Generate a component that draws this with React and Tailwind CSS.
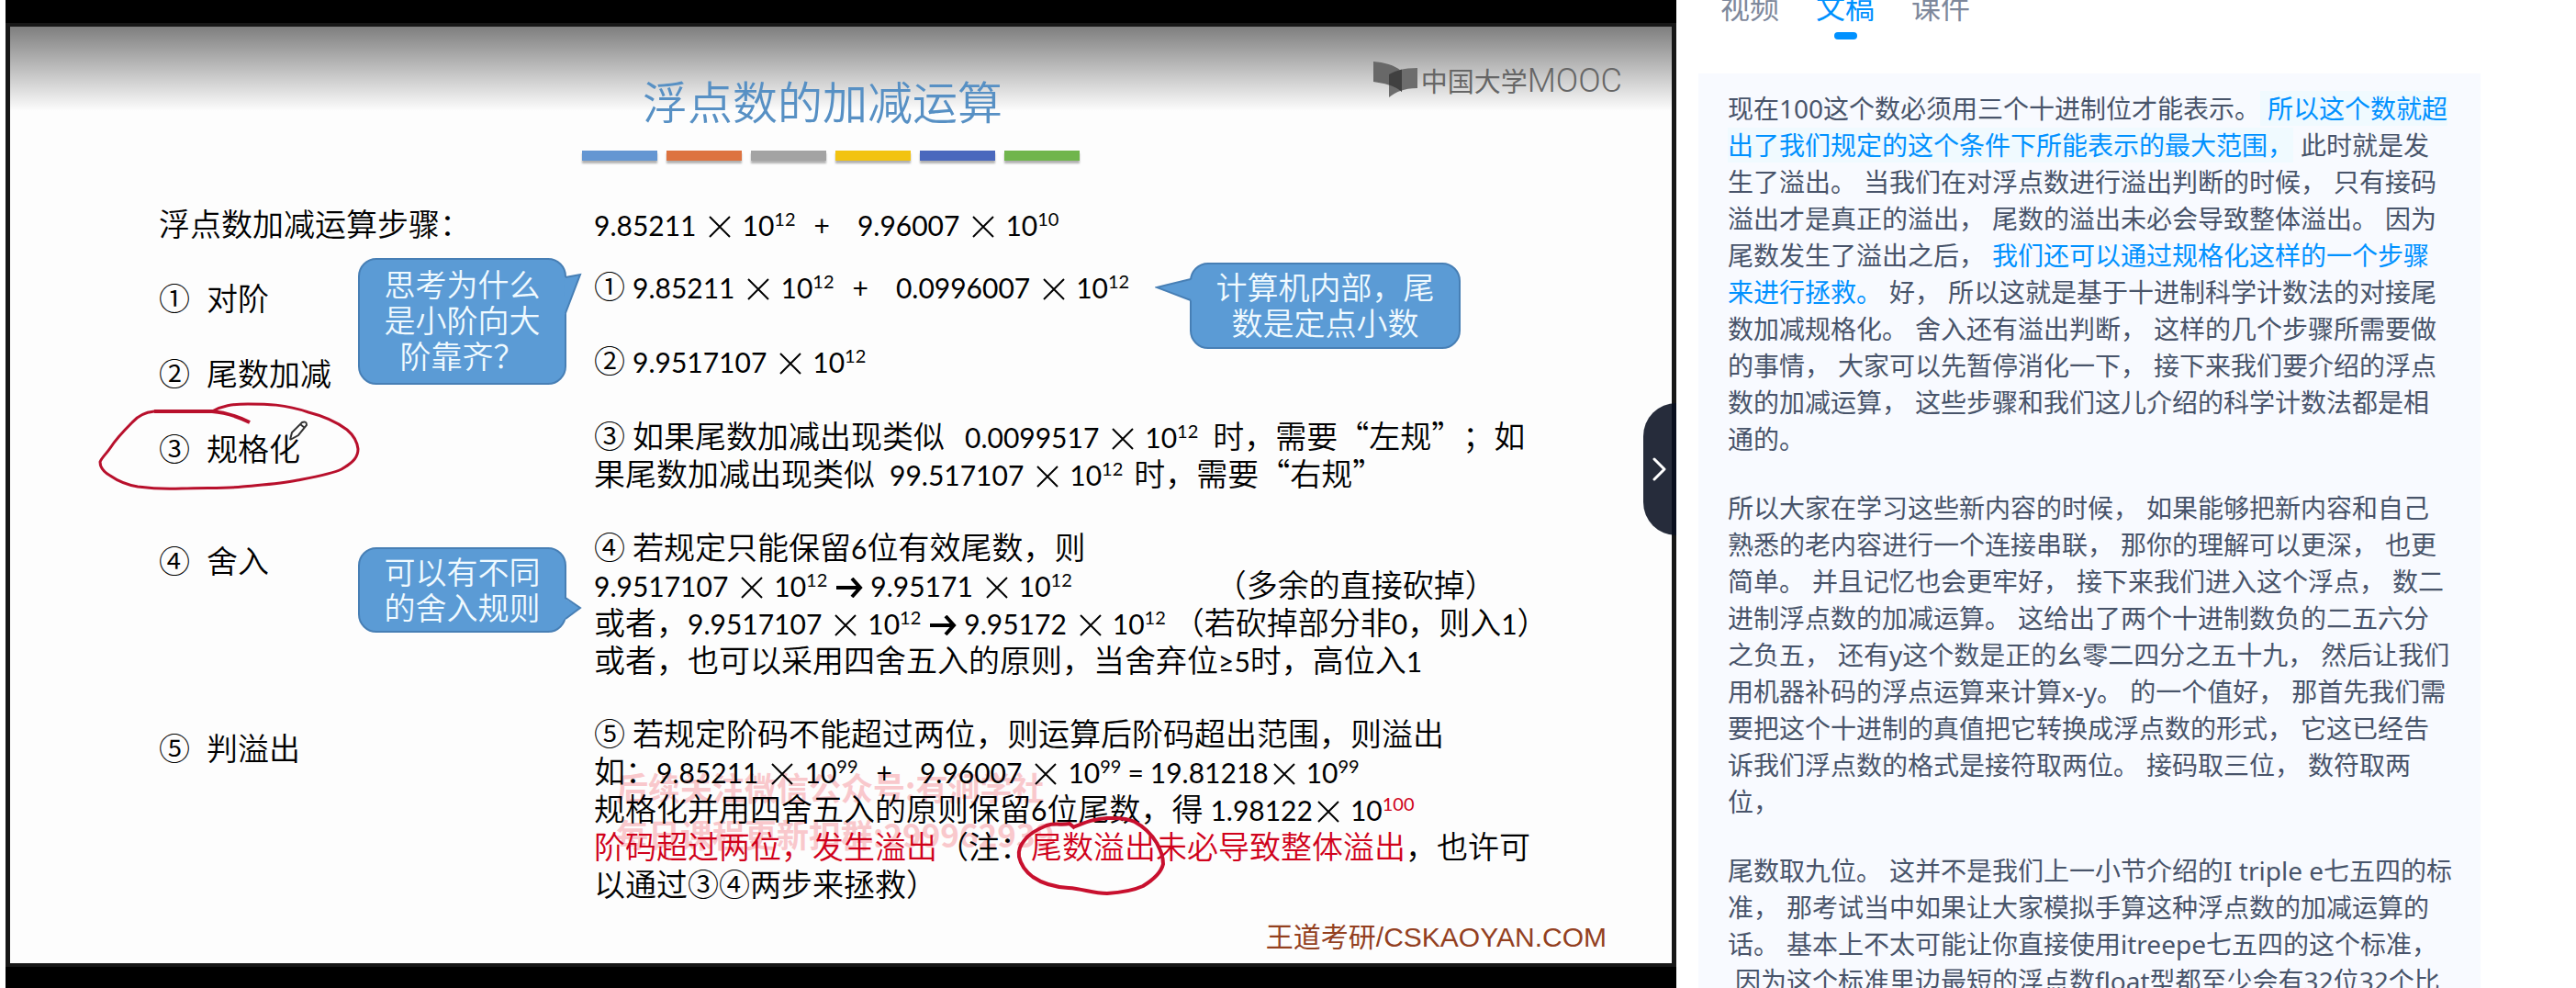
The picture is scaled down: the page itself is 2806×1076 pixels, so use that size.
const barColors = ['bg-[#6496d2]', 'bg-[#dd7340]', 'bg-[#a3a3a3]', 'bg-[#f2c311]', 'bg-[#4a68bd]', 'bg-[#70b54c]'];

function Num({ children }) {
  return <span className="font-['Lato',sans-serif] text-[30px] leading-none font-normal">{children}</span>;
}

function Times({ tight }) {
  return (
    <svg className={`mr-[12px] inline-block h-[24px] w-[24px] align-[-2px] ${tight ? 'ml-[5px]' : 'ml-[14px]'}`} viewBox="0 0 24 24" fill="none" stroke="currentColor" strokeWidth="2" aria-label="×">
      <path d="M1 1 23 23M23 1 1 23" />
    </svg>
  );
}

function Sci({ m, e, red, tight }) {
  return (
    <>
      <Num>{m}</Num>
      <Times tight={tight} />
      <Num>10</Num>
      <span className={`inline-block align-[11px] font-['Lato',sans-serif] text-[20px] leading-none font-normal ${red ? 'text-[#d0021b]' : ''}`}>{e}</span>
    </>
  );
}

function Plus() {
  return <span className="mr-[30px] ml-[20px] font-['Lato',sans-serif] text-[30px] leading-none font-normal">+</span>;
}

function Arrow() {
  return (
    <svg className="mr-[8px] ml-[10px] inline-block h-[22px] w-[29px] align-[-1px]" viewBox="0 0 29 22" fill="none" stroke="currentColor" strokeWidth="4" aria-label="→">
      <path d="M0 11H26M17 1 26 11 17 21" />
    </svg>
  );
}

function Step({ n, children, className = '' }) {
  return (
    <li className={`flex gap-[18px] leading-[41px] whitespace-nowrap ${className}`}>
      <span>{n}</span>
      <span>{children}</span>
    </li>
  );
}

function Bubble({ children, tail, className = '' }) {
  return (
    <div className={`relative rounded-[20px] border-2 border-[#477fb5] bg-[#5b9bd5] text-center leading-[39px] whitespace-nowrap text-[#f0faff] ${className}`}>
      {children}
      {tail}
    </div>
  );
}

function Slide() {
  return (
    <section className="relative min-h-0 flex-1 overflow-hidden bg-[#fdfdfd] font-['Noto_Sans_CJK_SC',sans-serif] text-[34px] font-[350] text-black [text-spacing-trim:space-all]">
      <div className="absolute inset-x-0 top-0 h-[92px] bg-linear-to-b from-black/50 to-black/0" />

      <div className="absolute top-[38px] right-[54px] flex items-center text-[#666]">
        <svg className="mr-[4px] h-[40px] w-[48px]" viewBox="0 0 48 40" aria-hidden="true">
          <path d="M0 0C12 1 24 4 31 11V33C24 26 12 24 0 22Z" fill="#686868" />
          <path d="M17 14C25 9 36 7 48 7V29C36 29 26 32 17 39Z" fill="#6d6d6d" />
          <path d="M17 14C22 11 27 9.500 31 8.800V33C27 29.500 22 27 17 25.500Z" fill="#404040" />
        </svg>
        <p className="text-[29px] leading-[40px] font-normal">
          中国大学<span className="font-['Roboto',sans-serif] text-[36px] leading-none font-light">MOOC</span>
        </p>
      </div>

      <h1 className="relative mt-[45px] pl-[689px] text-[49px] leading-[70px] text-[#5790c4]">浮点数的加减运算</h1>
      <div className="relative mt-[20px] flex gap-[10px] pl-[623px]">
        {barColors.map((c) => (
          <div key={c} className={`h-[11px] w-[82px] shadow-[0_3px_2px_rgba(0,0,0,0.3)] ${c}`} />
        ))}
      </div>

      <div className="mt-[47px] flex items-center leading-[41px] whitespace-nowrap">
        <h2 className="w-[636px] pl-[162px]">浮点数加减运算步骤：</h2>
        <p><Sci m="9.85211" e="12" /><Plus /><Sci m="9.96007" e="10" /></p>
      </div>

      <div className="flex pl-[162px]">
        <ol className="w-[217px] shrink-0 pt-[40px]">
          <Step n="①">对阶</Step>
          <Step n="②" className="mt-[41px]">尾数加减</Step>
          <Step n="③" className="mt-[41px]">规格化</Step>
          <Step n="④" className="mt-[81px]">舍入</Step>
          <Step n="⑤" className="mt-[163px]">判溢出</Step>
        </ol>

        <div className="w-[257px] shrink-0 pt-[18px]">
          <Bubble
            className="h-[138px] w-[227px] pt-[6px]"
            tail={
              <svg className="absolute top-[14px] -right-[19px] h-[48px] w-[20px]" viewBox="0 0 20 48" aria-hidden="true">
                <path d="M0 5 18 2 1 46Z" fill="#5b9bd5" />
                <path d="M2 5 18 2 2 44" fill="none" stroke="#477fb5" strokeWidth="2" />
              </svg>
            }
          >
            思考为什么<br />是小阶向大<br />阶靠齐？
          </Bubble>
          <Bubble
            className="mt-[177px] h-[93px] w-[227px] pt-[4px]"
            tail={
              <svg className="absolute top-[50px] -right-[19px] h-[30px] w-[20px]" viewBox="0 0 20 30" aria-hidden="true">
                <path d="M0 3 18 14 0 27Z" fill="#5b9bd5" />
                <path d="M2 3 18 14 2 26" fill="none" stroke="#477fb5" strokeWidth="2" />
              </svg>
            }
          >
            可以有不同<br />的舍入规则
          </Bubble>
        </div>

        <div className="leading-[41px] whitespace-nowrap">
          <div className="flex items-start pt-[23px]">
            <div className="w-[649px] pt-[4px]">
              <p>①<span className="ml-[8px]"><Sci m="9.85211" e="12" /></span><Plus /><Sci m="0.0996007" e="12" /></p>
              <p className="mt-[40px]">②<span className="ml-[8px]"><Sci m="9.9517107" e="12" /></span></p>
            </div>
            <Bubble
              className="h-[94px] w-[295px] pt-[4px]"
              tail={
                <svg className="absolute top-[14px] -left-[40px] h-[28px] w-[41px]" viewBox="0 0 41 28" aria-hidden="true">
                  <path d="M41 2 2 11 41 26Z" fill="#5b9bd5" />
                  <path d="M39 2 2 11 39 25" fill="none" stroke="#477fb5" strokeWidth="2" />
                </svg>
              }
            >
              计算机内部，尾<br />数是定点小数
            </Bubble>
          </div>

          <p className="mt-[41px]">
            ③<span className="ml-[8px]">如果尾数加减出现类似</span><span className="ml-[22px]"><Sci m="0.0099517" e="12" /></span><span className="ml-[16px]">时，需要“左规”；如</span><br />
            果尾数加减出现类似<span className="ml-[16px]"><Sci m="99.517107" e="12" /></span><span className="ml-[12px]">时，需要“右规”</span>
          </p>

          <p className="mt-[39px]">
            ④<span className="ml-[8px]">若规定只能保留</span><Num>6</Num>位有效尾数，则<br />
            <Sci m="9.9517107" e="12" /><Arrow /><Sci m="9.95171" e="12" /><span className="ml-[156px]">（多余的直接砍掉）</span><br />
            或者，<Sci m="9.9517107" e="12" /><Arrow /><Sci m="9.95172" e="12" /><span className="ml-[8px]">（若砍掉部分非<Num>0</Num>，则入<Num>1</Num>）</span><br />
            或者，也可以采用四舍五入的原则，当舍弃位<Num>≥5</Num>时，高位入<Num>1</Num>
          </p>

          <div className="relative mt-[39px]">
            <p aria-hidden="true" className="absolute top-[54px] left-[24px] text-[35px] leading-[51px] font-bold text-[#f9c8cc]">
              后续关注微信公众号:有涧学社<br />每日课程更新扣群:299962939
            </p>
            <p className="relative">
              ⑤<span className="ml-[8px]">若规定阶码不能超过两位，则运算后阶码超出范围，则溢出</span><br />
              如：<Sci m="9.85211" e="99" /><Plus /><Sci m="9.96007" e="99" /><span className="mx-[7px]"><Num>=</Num></span><Sci m="19.81218" e="99" tight /><br />
              规格化并用四舍五入的原则保留<Num>6</Num>位尾数，得<span className="ml-[8px]"><Sci m="1.98122" e="100" red tight /></span><br />
              <span className="text-[#d0021b]">阶码超过两位，发生溢出</span>（注：<span className="text-[#d0021b]">尾数溢出未必导致整体溢出</span>，也许可<br />
              以通过③④两步来拯救）
            </p>
          </div>
        </div>
      </div>

      <p className="absolute right-[71px] bottom-[8px] text-[30px] leading-[40px] font-normal text-[#93401f]">
        王道考研<span className="font-['Liberation_Sans',sans-serif]">/CSKAOYAN.COM</span>
      </p>

      <svg className="absolute top-[401px] left-[90px] h-[110px] w-[300px]" viewBox="101 430 300 110" fill="none" stroke="#b8102c" aria-hidden="true">
        <path d="M231 448H168C158 449 150 453 144 460C134 470 127 477 120 488C116 494 111 498 109 503C109 510 113 514 120 518C130 525 138 528 150 530C165 532 180 533 198 532C225 531 245 532 264 530C285 528 305 527 324 523C345 519 362 516 372 511C386 503 390 497 390 489C389 480 385 474 378 468C366 459 352 453 336 449C310 440 290 440 270 440C252 440 242 442 231 448" strokeWidth="3" />
        <path d="M168 448H231C245 449 258 453 272 460" strokeWidth="4" />
        <path d="M316 479 318 471 329 460Q334 458 334 463L325 474 316 479M327 462 332 466" stroke="#333" strokeWidth="2" fill="#fff" />
      </svg>
      <svg className="absolute top-[851px] left-[1089px] h-[100px] w-[180px]" viewBox="1100 880 180 100" fill="none" stroke="#c8102e" strokeWidth="4" aria-hidden="true">
        <path d="M1171 902 1165 897C1156 899 1150 896 1140 899C1128 904 1120 909 1116 915C1110 922 1109 927 1110 933C1112 942 1117 949 1125 955C1135 962 1148 966 1164 967C1180 968 1190 973 1206 973C1222 972 1234 970 1245 965C1258 957 1265 950 1267 941C1267 932 1264 926 1260 918C1254 908 1247 901 1236 895C1226 890 1215 891 1206 891C1190 892 1182 896 1168 901" />
      </svg>
    </section>
  );
}

const transcript = [
  [
    ['现在100这个数必须用三个十进制位才能表示。'],
    ['所以这个数就超出了我们规定的这个条件下所能表示的最大范围，', 'active'],
    ['此时就是发生了溢出。'],
    ['当我们在对浮点数进行溢出判断的时候，'],
    ['只有接码溢出才是真正的溢出，'],
    ['尾数的溢出未必会导致整体溢出。'],
    ['因为尾数发生了溢出之后，'],
    ['我们还可以通过规格化这样的一个步骤来进行拯救。', 'marked'],
    ['好，'],
    ['所以这就是基于十进制科学计数法的对接尾数加减规格化。'],
    ['舍入还有溢出判断，'],
    ['这样的几个步骤所需要做的事情，'],
    ['大家可以先暂停消化一下，'],
    ['接下来我们要介绍的浮点数的加减运算，'],
    ['这些步骤和我们这儿介绍的科学计数法都是相通的。'],
  ],
  [
    ['所以大家在学习这些新内容的时候，'],
    ['如果能够把新内容和自己熟悉的老内容进行一个连接串联，'],
    ['那你的理解可以更深，'],
    ['也更简单。'],
    ['并且记忆也会更牢好，'],
    ['接下来我们进入这个浮点，'],
    ['数二进制浮点数的加减运算。'],
    ['这给出了两个十进制数负的二五六分之负五，'],
    ['还有y这个数是正的幺零二四分之五十九，'],
    ['然后让我们用机器补码的浮点运算来计算x-y。'],
    ['的一个值好，'],
    ['那首先我们需要把这个十进制的真值把它转换成浮点数的形式，'],
    ['它这已经告诉我们浮点数的格式是接符取两位。'],
    ['接码取三位，'],
    ['数符取两位，'],
  ],
  [
    ['尾数取九位。'],
    ['这并不是我们上一小节介绍的I triple e七五四的标准，'],
    ['那考试当中如果让大家模拟手算这种浮点数的加减运算的话。'],
    ['基本上不太可能让你直接使用itreepe七五四的这个标准，'],
    ['因为这个标准里边最短的浮点数float型都至少会有32位32个比特位，'],
  ],
];

const tones = { active: 'bg-[#f0faff] text-[#0091ff]', marked: 'text-[#0091ff]' };

function Transcript() {
  return (
    <aside className="flex min-h-0 flex-col bg-white pr-[104px] pl-[24px] font-['Noto_Sans','Noto_Sans_CJK_SC',sans-serif]">
      <nav role="tablist" className="-mt-[12px] flex h-[92px] shrink-0 items-start gap-[40px] pl-[24px] text-[32px] leading-[40px] text-[#7e889b]">
        <button role="tab">视频</button>
        <button role="tab" aria-selected="true" className="flex flex-col items-center text-[#0091ff]">
          文稿
          <span className="mt-[7px] h-[8px] w-[25px] rounded-[4px] bg-[#0091ff]" />
        </button>
        <button role="tab">课件</button>
      </nav>
      <div className="min-h-0 flex-1 overflow-hidden bg-[#f8faff] pt-[18px] pr-[30px] pl-[32px] text-[28px] leading-[40px] text-[#48546a]">
        {transcript.map((p, i) => (
          <p key={i} className="mb-[35px]">
            {p.map(([text, tone], j) => (
              <span key={j} className={`${j ? 'pl-[8px]' : ''} ${tone ? tones[tone] : ''}`}>{text}</span>
            ))}
          </p>
        ))}
      </div>
    </aside>
  );
}

export default function App() {
  return (
    <main lang="zh-CN" className="grid h-screen grid-cols-[913fr_490fr] grid-rows-1 overflow-hidden bg-white">
      <div className="relative ml-[6px] flex min-h-0 flex-col bg-black pt-[25px] pb-[23px]">
        <div className="flex min-h-0 flex-1 flex-col bg-[#171717] px-[5px] py-[4px]">
          <Slide />
        </div>
        <button aria-label="展开" className="absolute top-[439px] right-0 flex h-[144px] w-[36px] items-center justify-center rounded-l-[36px] bg-[#080f20]/88">
          <svg className="h-[26px] w-[16px]" viewBox="0 0 16 26" fill="none" stroke="#fff" strokeWidth="3" strokeLinecap="round" strokeLinejoin="round" aria-hidden="true">
            <path d="M2 2 13 13 2 24" />
          </svg>
        </button>
      </div>
      <Transcript />
    </main>
  );
}
